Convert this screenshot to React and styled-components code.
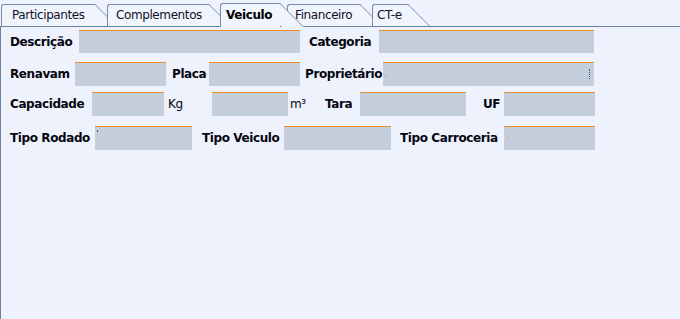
import React from "react";
import styled, { createGlobalStyle } from "styled-components";

const Global = createGlobalStyle`
  html, body { margin: 0; padding: 0; background: #eef2fc; }
  body { font-family: "DejaVu Sans", "Noto Sans", sans-serif; font-size: 12px; letter-spacing: -0.4px; color: #000; }
`;

const Page = styled.div`
  width: 680px;
  height: 319px;
  display: flex;
  flex-direction: column;
  background: #eef2fc;
  overflow: hidden;
`;

const Strip = styled.div`
  height: 27px;
  box-sizing: border-box;
  border-bottom: 1px solid #6f81a3;
  display: flex;
  align-items: flex-end;
  padding-left: 1px;
  flex-shrink: 0;
`;

const Tab = styled.div`
  position: relative;
  z-index: ${(p) => p.$z};
  width: ${(p) => p.$w}px;
  height: ${(p) => (p.$active ? 24 : 22)}px;
  margin-bottom: ${(p) => (p.$active ? -1 : 0)}px;
  margin-left: ${(p) => p.$ml || 0}px;
  padding-left: ${(p) => p.$pl}px;
  padding-top: ${(p) => (p.$active ? 4 : 3)}px;
  box-sizing: border-box;
  background: #f0f4fd;
  border-top: 1px solid #7b8aa8;
  border-left: 1px solid #7b8aa8;
  border-top-left-radius: 3px;
  flex-shrink: 0;
  font-weight: ${(p) => (p.$active ? 700 : 400)};
  white-space: nowrap;
  &::after {
    content: "";
    position: absolute;
    top: -1px;
    right: 0;
    width: 22px;
    height: calc(100% + 1px);
    box-sizing: border-box;
    background: #f0f4fd;
    border-top: 1px solid #7b8aa8;
    border-right: 1px solid #7b8aa8;
    transform: skewX(45deg);
    transform-origin: 0 0;
  }
`;

const TabText = styled.span`
  position: relative;
  z-index: 1;
  line-height: 14px;
  color: ${(p) => (p.$active ? "#000" : "#10102a")};
`;

const Body = styled.div`
  flex: 1;
  border-left: 1px solid #6b7fa3;
  padding: 3px 0 0 9px;
  display: flex;
  flex-direction: column;
`;

const Row = styled.div`
  display: flex;
  align-items: center;
  height: ${(p) => p.$h}px;
  margin-top: ${(p) => p.$mt}px;
`;

const Label = styled.span`
  width: ${(p) => p.$w}px;
  padding-left: ${(p) => p.$pl || 0}px;
  box-sizing: border-box;
  font-weight: ${(p) => (p.$unit ? 400 : 700)};
  flex-shrink: 0;
  white-space: nowrap;
  color: #050510;
`;

const Field = styled.div`
  position: relative;
  width: ${(p) => p.$w}px;
  height: 100%;
  box-sizing: border-box;
  background: #c4cfdb;
  border-top: 1px solid #f08c24;
  flex-shrink: 0;
`;

const Mark = styled.span`
  position: absolute;
  left: ${(p) => p.$x}px;
  top: ${(p) => p.$y}px;
  width: 1px;
  height: ${(p) => p.$h}px;
  background: ${(p) => (p.$dots ? "none" : p.$c)};
  border-left: ${(p) => (p.$dots ? `1px dotted ${p.$c}` : "none")};
`;

const tabs = [
  { t: "Participantes", w: 94, pl: 10, z: 1 },
  { t: "Complementos", w: 102, pl: 8, z: 2, ml: 12 },
  { t: "Veiculo", w: 60, pl: 5, z: 10, ml: 11, active: true },
  { t: "Financeiro", w: 73, pl: 7, z: 3, ml: 7 },
  { t: "CT-e", w: 36, pl: 4, z: 4, ml: 12 },
];

export default function App() {
  return (
    <>
      <Global />
      <Page>
        <Strip>
          {tabs.map((tb) => (
            <Tab key={tb.t} $w={tb.w} $pl={tb.pl} $z={tb.z} $ml={tb.ml} $active={tb.active}>
              <TabText $active={tb.active}>{tb.t}</TabText>
            </Tab>
          ))}
        </Strip>
        <Body>
          <Row $h={23} $mt={0}>
            <Label $w={69}>Descrição</Label>
            <Field $w={221} />
            <Label $w={79} $pl={9}>Categoria</Label>
            <Field $w={215} />
          </Row>
          <Row $h={24} $mt={9}>
            <Label $w={65}>Renavam</Label>
            <Field $w={91} />
            <Label $w={43} $pl={6}>Placa</Label>
            <Field $w={91} />
            <Label $w={83} $pl={5}>Proprietário</Label>
            <Field $w={211}>
              <Mark $x={2} $y={12} $h={1} $c="#8a96a8" />
              <Mark $x={206} $y={6} $h={10} $c="#3a5a9a" $dots />
            </Field>
          </Row>
          <Row $h={24} $mt={6}>
            <Label $w={82}>Capacidade</Label>
            <Field $w={72} />
            <Label $w={48} $pl={4} $unit>Kg</Label>
            <Field $w={76} />
            <Label $w={32} $pl={2} $unit>m³</Label>
            <Label $w={40} $pl={5}>Tara</Label>
            <Field $w={106} />
            <Label $w={38} $pl={17}>UF</Label>
            <Field $w={91} />
          </Row>
          <Row $h={24} $mt={10}>
            <Label $w={85}>Tipo Rodado</Label>
            <Field $w={97}>
              <Mark $x={2} $y={3} $h={2} $c="#4a5a80" />
            </Field>
            <Label $w={92} $pl={10}>Tipo Veiculo</Label>
            <Field $w={107} />
            <Label $w={113} $pl={9}>Tipo Carroceria</Label>
            <Field $w={91}>
              <Mark $x={3} $y={8} $h={6} $c="#b8b0a0" $dots />
            </Field>
          </Row>
        </Body>
      </Page>
    </>
  );
}
